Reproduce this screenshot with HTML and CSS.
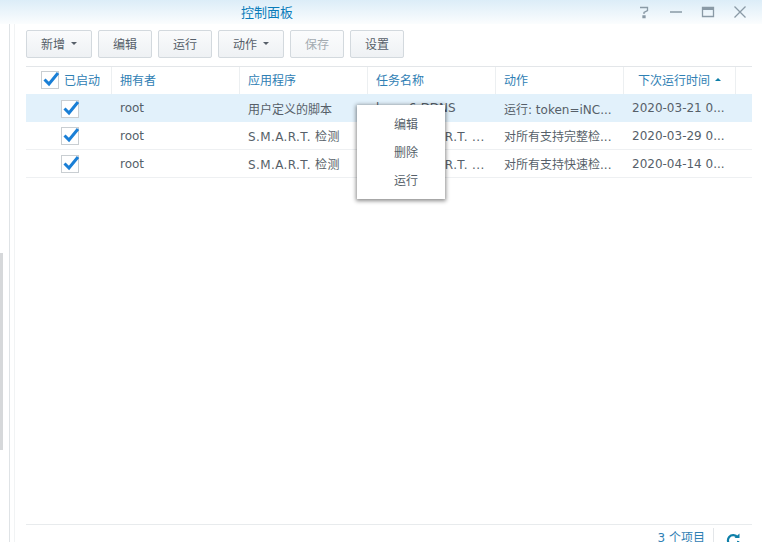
FILE: index.html
```html
<!DOCTYPE html>
<html lang="zh-CN">
<head>
    <meta charset="UTF-8">
    <title>控制面板</title>
    <link rel="stylesheet" href="styles.css">
</head>
<body>
<div class="window">
    <div class="title-bar">
        <span class="title-text">控制面板</span>
        <div class="win-tools">
            <svg width="14" height="14" viewBox="0 0 14 14"><path d="M3 2.500h7.500v3l-3.500 2v1.500M6 11h2v1.500h-2z" fill="none" stroke="#8a9aa6" stroke-width="1.300"/></svg>
            <svg width="14" height="14" viewBox="0 0 14 14"><path d="M1 7h12" stroke="#8a9aa6" stroke-width="1.500"/></svg>
            <svg width="14" height="14" viewBox="0 0 14 14"><path d="M1.500 2.500h11v9h-11z" fill="none" stroke="#8a9aa6" stroke-width="1.300"/><path d="M1.500 4h11" stroke="#8a9aa6" stroke-width="2"/></svg>
            <svg width="14" height="14" viewBox="0 0 14 14"><path d="M1.500 1.500l11 11M12.500 1.500l-11 11" stroke="#8a9aa6" stroke-width="1.300"/></svg>
        </div>
    </div>
    <div class="win-body">
        <div class="side-strip"><div class="side-thumb"></div></div>
        <div class="main">
            <div class="toolbar">
                <a class="btn btn-caret">新增<i class="caret"></i></a>
                <a class="btn">编辑</a>
                <a class="btn">运行</a>
                <a class="btn btn-caret">动作<i class="caret"></i></a>
                <a class="btn disabled">保存</a>
                <a class="btn">设置</a>
            </div>
            <div class="grid">
                <div class="grid-head row-cols">
                    <div class="cell cell-check head-check">
                        <svg class="check" width="20" height="19" viewBox="0 0 20 19"><rect x="0.500" y="1.500" width="17" height="17" fill="#fff" stroke="#c9ced2"/><path d="M3.500 9.500l4.500 4.500 9-11" fill="none" stroke="#1a7fd6" stroke-width="3"/></svg>
                        <span>已启动</span>
                    </div>
                    <div class="cell">拥有者</div>
                    <div class="cell">应用程序</div>
                    <div class="cell">任务名称</div>
                    <div class="cell">动作</div>
                    <div class="cell cell-sort">下次运行时间<i class="sort-up"></i></div>
                    <div class="cell cell-rest"></div>
                </div>
                <div class="grid-row row-cols selected">
                    <div class="cell cell-check">
                        <svg class="check" width="20" height="19" viewBox="0 0 20 19"><rect x="0.500" y="1.500" width="17" height="17" fill="#fff" stroke="#c9ced2"/><path d="M3.500 9.500l4.500 4.500 9-11" fill="none" stroke="#1a7fd6" stroke-width="3"/></svg>
                    </div>
                    <div class="cell">root</div>
                    <div class="cell">用户定义的脚本</div>
                    <div class="cell">hexo 6-DDNS</div>
                    <div class="cell">运行: token=iNC...</div>
                    <div class="cell">2020-03-21 0...</div>
                </div>
                <div class="grid-row row-cols">
                    <div class="cell cell-check">
                        <svg class="check" width="20" height="19" viewBox="0 0 20 19"><rect x="0.500" y="1.500" width="17" height="17" fill="#fff" stroke="#c9ced2"/><path d="M3.500 9.500l4.500 4.500 9-11" fill="none" stroke="#1a7fd6" stroke-width="3"/></svg>
                    </div>
                    <div class="cell">root</div>
                    <div class="cell smart">S.M.A.R.T. 检测</div>
                    <div class="cell smart">自动 S.M.A.R.T. ...</div>
                    <div class="cell">对所有支持完整检...</div>
                    <div class="cell">2020-03-29 0...</div>
                </div>
                <div class="grid-row row-cols">
                    <div class="cell cell-check">
                        <svg class="check" width="20" height="19" viewBox="0 0 20 19"><rect x="0.500" y="1.500" width="17" height="17" fill="#fff" stroke="#c9ced2"/><path d="M3.500 9.500l4.500 4.500 9-11" fill="none" stroke="#1a7fd6" stroke-width="3"/></svg>
                    </div>
                    <div class="cell">root</div>
                    <div class="cell smart">S.M.A.R.T. 检测</div>
                    <div class="cell smart">自动 S.M.A.R.T. ...</div>
                    <div class="cell">对所有支持快速检...</div>
                    <div class="cell">2020-04-14 0...</div>
                </div>
            </div>
            <div class="status-bar">
                <span class="count">3 个项目</span>
                <span class="status-sep"></span>
                <svg class="refresh" width="14" height="14" viewBox="0 0 14 14"><path d="M11.500 4.500a5.200 5.200 0 1 0 .8 3.500" fill="none" stroke="#0e7fa8" stroke-width="2.200"/><path d="M8.500 5h5v-4.500z" fill="#0e7fa8"/></svg>
            </div>
        </div>
    </div>
</div>
<div class="context-menu">
    <a>编辑</a>
    <a>删除</a>
    <a>运行</a>
</div>
</body>
</html>
```

FILE: styles.css
```css
html, body {
    margin: 0;
    padding: 0;
    height: 100%;
    overflow: hidden;
    background: #fff;
}
body {
    font-family: "DejaVu Sans", "Noto Sans CJK SC", sans-serif;
    font-size: 12px;
    color: #565f69;
}
/* taller than the viewport: the status bar is cut off at the bottom */
.window {
    height: 548px;
    display: flex;
    flex-direction: column;
}
.title-bar {
    height: 24px;
    flex: none;
    display: flex;
    align-items: center;
    justify-content: space-between;
    padding: 0 15px 0 241px;
    box-sizing: border-box;
    background: linear-gradient(#dcedf8, #fbfdfe);
}
.title-text {
    font-size: 13px;
    color: #0a7cba;
    padding-bottom: 2px;
}
.win-tools {
    display: flex;
    gap: 18px;
}
.win-body {
    flex: 1;
    display: flex;
    min-height: 0;
}
.side-strip {
    width: 9px;
    flex: none;
    border-right: 1px solid #dfe3e6;
    background: #fff;
}
.side-thumb {
    width: 3px;
    height: 197px;
    margin-top: 229px;
    background: #d6d8da;
}
.main {
    flex: 1;
    margin-left: 4px;
    border-left: 1px solid #f1f3f4;
    padding: 6px 10px 0 11px;
    display: flex;
    flex-direction: column;
    min-width: 0;
}
.toolbar {
    display: flex;
    gap: 6px;
    height: 28px;
    margin-bottom: 8px;
}
.btn {
    width: 54px;
    height: 28px;
    box-sizing: border-box;
    padding-bottom: 1px;
    display: flex;
    align-items: center;
    justify-content: center;
    border: 1px solid #d3d9de;
    border-radius: 2px;
    background: linear-gradient(#fafbfc, #eef1f4);
    color: #565f69;
}
.btn-caret {
    width: 66px;
}
.btn.disabled {
    color: #a4abb1;
    background: linear-gradient(#fbfcfd, #f3f5f7);
}
.caret {
    display: inline-block;
    margin-left: 6px;
    border-top: 3px solid #565f69;
    border-left: 3px solid transparent;
    border-right: 3px solid transparent;
}
.grid {
    flex: 1;
}
.row-cols {
    display: grid;
    grid-template-columns: 86px 128px 128px 128px 128px 112px 17px;
    align-items: stretch;
}
.grid-head {
    height: 28px;
    border-top: 1px solid #e3e6e9;
    box-sizing: border-box;
    color: #2f80b4;
}
.grid-head .cell {
    border-right: 1px solid #eceff1;
    padding-bottom: 2px;
}
.grid-head .cell:last-child {
    border-right: 0;
}
.cell {
    display: flex;
    align-items: center;
    padding-left: 8px;
    white-space: nowrap;
    overflow: hidden;
}
.cell-check {
    padding-left: 35px;
    overflow: visible;
}
.head-check {
    padding-left: 15px;
    gap: 3px;
}
.check {
    flex: none;
}
.smart {
    letter-spacing: .4px;
}
.cell-sort {
    padding-left: 14px;
}
.sort-up {
    display: inline-block;
    margin-left: 5px;
    border-bottom: 3px solid #0e7fa8;
    border-left: 3px solid transparent;
    border-right: 3px solid transparent;
}
.grid-row {
    height: 28px;
    box-sizing: border-box;
    border-bottom: 1px solid #eef0f2;
}
.grid-row.selected {
    background: #e2f1fb;
    border-bottom: 0;
}
.status-bar {
    height: 24px;
    flex: none;
    box-sizing: border-box;
    border-top: 1px solid #e8ebed;
    display: flex;
    align-items: flex-start;
    justify-content: flex-end;
    padding-top: 3px;
    color: #2f80b4;
}
.status-sep {
    width: 1px;
    height: 20px;
    margin: 0 12px 0 8px;
    background: #e3e6e9;
}
.refresh {
    margin: 5px 12px 0 0;
    flex: none;
}
.context-menu {
    position: absolute;
    left: 357px;
    top: 105px;
    width: 88px;
    height: 94px;
    box-sizing: border-box;
    padding-top: 6px;
    background: #fff;
    box-shadow: 0 1px 4px 1px rgba(0, 0, 0, .45);
}
.context-menu a {
    display: block;
    height: 28px;
    line-height: 28px;
    text-align: center;
    padding-left: 10px;
}
```
